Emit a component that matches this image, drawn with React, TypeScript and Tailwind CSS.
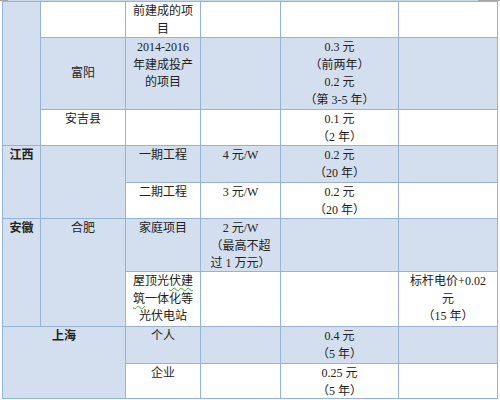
const blue = "bg-[#d3dfee]";
const white = "bg-white";

function Cell({
  className,
  lines = [],
  center,
  bold,
}: {
  className: string;
  lines?: React.ReactNode[];
  center?: boolean;
  bold?: boolean;
}) {
  return (
    <div
      className={`flex flex-col items-center text-center ${
        center ? "justify-center" : "justify-start pt-px"
      } ${bold ? "font-bold" : ""} ${className}`}
    >
      {lines.map((l, i) => (
        <div key={i} className="whitespace-nowrap">
          {l}
        </div>
      ))}
    </div>
  );
}

function Squiggle({ children }: { children: React.ReactNode }) {
  return (
    <span className="underline decoration-wavy decoration-[#3aa53a] decoration-1 underline-offset-2">
      {children}
    </span>
  );
}

export default function App() {
  return (
    <div className="w-[500px] h-[400px] bg-white overflow-hidden">
      <div className="flex h-px">
        <div className="w-[8px] bg-[#a6a6a6]" />
        <div className="flex-1 bg-[#c9d7ea]" />
        <div className="w-[22px] bg-[#a6a6a6]" />
      </div>
      <div
        className="ml-[2px] w-fit grid grid-cols-[37px_84px_74px_79px_117px_98px] grid-rows-[35px_71px_35px_36px_35px_52px_54px_36px_34px] gap-px p-px bg-[#95b3d7] text-[12px] leading-[17.5px] text-[#222]"
        style={{ fontFamily: '"Liberation Serif", "Noto Sans CJK SC", serif' }}
      >
        {/* 浙江（续） */}
        <Cell className={`${blue} col-start-1 row-start-1 row-span-3`} />
        <Cell className={`${white} col-start-2 row-start-1`} />
        <Cell className={`${white} col-start-3 row-start-1`} lines={["前建成的项", "目"]} />
        <Cell className={`${white} col-start-4 row-start-1`} />
        <Cell className={`${white} col-start-5 row-start-1`} />
        <Cell className={`${white} col-start-6 row-start-1`} />

        <Cell className={`${blue} col-start-2 row-start-2`} lines={["富阳"]} center />
        <Cell
          className={`${blue} col-start-3 row-start-2`}
          lines={["2014-2016", "年建成投产", "的项目"]}
        />
        <Cell className={`${blue} col-start-4 row-start-2`} />
        <Cell
          className={`${blue} col-start-5 row-start-2`}
          lines={["0.3 元", "（前两年）", "0.2 元", "（第 3-5 年）"]}
        />
        <Cell className={`${blue} col-start-6 row-start-2`} />

        <Cell className={`${white} col-start-2 row-start-3`} lines={["安吉县"]} />
        <Cell className={`${white} col-start-3 row-start-3`} />
        <Cell className={`${white} col-start-4 row-start-3`} />
        <Cell className={`${white} col-start-5 row-start-3`} lines={["0.1 元", "（2 年）"]} />
        <Cell className={`${white} col-start-6 row-start-3`} />

        {/* 江西 */}
        <Cell className={`${blue} col-start-1 row-start-4 row-span-2`} lines={["江西"]} bold />
        <Cell className={`${blue} col-start-2 row-start-4 row-span-2`} />
        <Cell className={`${blue} col-start-3 row-start-4`} lines={["一期工程"]} />
        <Cell className={`${blue} col-start-4 row-start-4`} lines={["4 元/W"]} />
        <Cell className={`${blue} col-start-5 row-start-4`} lines={["0.2 元", "（20 年）"]} />
        <Cell className={`${blue} col-start-6 row-start-4`} />

        <Cell className={`${white} col-start-3 row-start-5`} lines={["二期工程"]} />
        <Cell className={`${white} col-start-4 row-start-5`} lines={["3 元/W"]} />
        <Cell className={`${white} col-start-5 row-start-5`} lines={["0.2 元", "（20 年）"]} />
        <Cell className={`${white} col-start-6 row-start-5`} />

        {/* 安徽 */}
        <Cell className={`${blue} col-start-1 row-start-6 row-span-2`} lines={["安徽"]} bold />
        <Cell className={`${blue} col-start-2 row-start-6 row-span-2`} lines={["合肥"]} />
        <Cell className={`${blue} col-start-3 row-start-6`} lines={["家庭项目"]} />
        <Cell
          className={`${blue} col-start-4 row-start-6`}
          lines={["2 元/W", "（最高不超", "过 1 万元）"]}
        />
        <Cell className={`${blue} col-start-5 row-start-6`} />
        <Cell className={`${blue} col-start-6 row-start-6`} />

        <Cell
          className={`${white} col-start-3 row-start-7`}
          lines={[
            <>
              屋顶光<Squiggle>伏建</Squiggle>
            </>,
            <>
              <Squiggle>筑</Squiggle>一体化等
            </>,
            "光伏电站",
          ]}
        />
        <Cell className={`${white} col-start-4 row-start-7`} />
        <Cell className={`${white} col-start-5 row-start-7`} />
        <Cell
          className={`${white} col-start-6 row-start-7`}
          lines={["标杆电价+0.02", "元", "（15 年）"]}
        />

        {/* 上海 */}
        <Cell
          className={`${blue} col-start-1 col-span-2 row-start-8 row-span-2`}
          lines={["上海"]}
          bold
        />
        <Cell className={`${blue} col-start-3 row-start-8`} lines={["个人"]} />
        <Cell className={`${blue} col-start-4 row-start-8`} />
        <Cell className={`${blue} col-start-5 row-start-8`} lines={["0.4 元", "（5 年）"]} />
        <Cell className={`${blue} col-start-6 row-start-8`} />

        <Cell className={`${white} col-start-3 row-start-9`} lines={["企业"]} />
        <Cell className={`${white} col-start-4 row-start-9`} />
        <Cell className={`${white} col-start-5 row-start-9`} lines={["0.25 元", "（5 年）"]} />
        <Cell className={`${white} col-start-6 row-start-9`} />
      </div>
    </div>
  );
}
